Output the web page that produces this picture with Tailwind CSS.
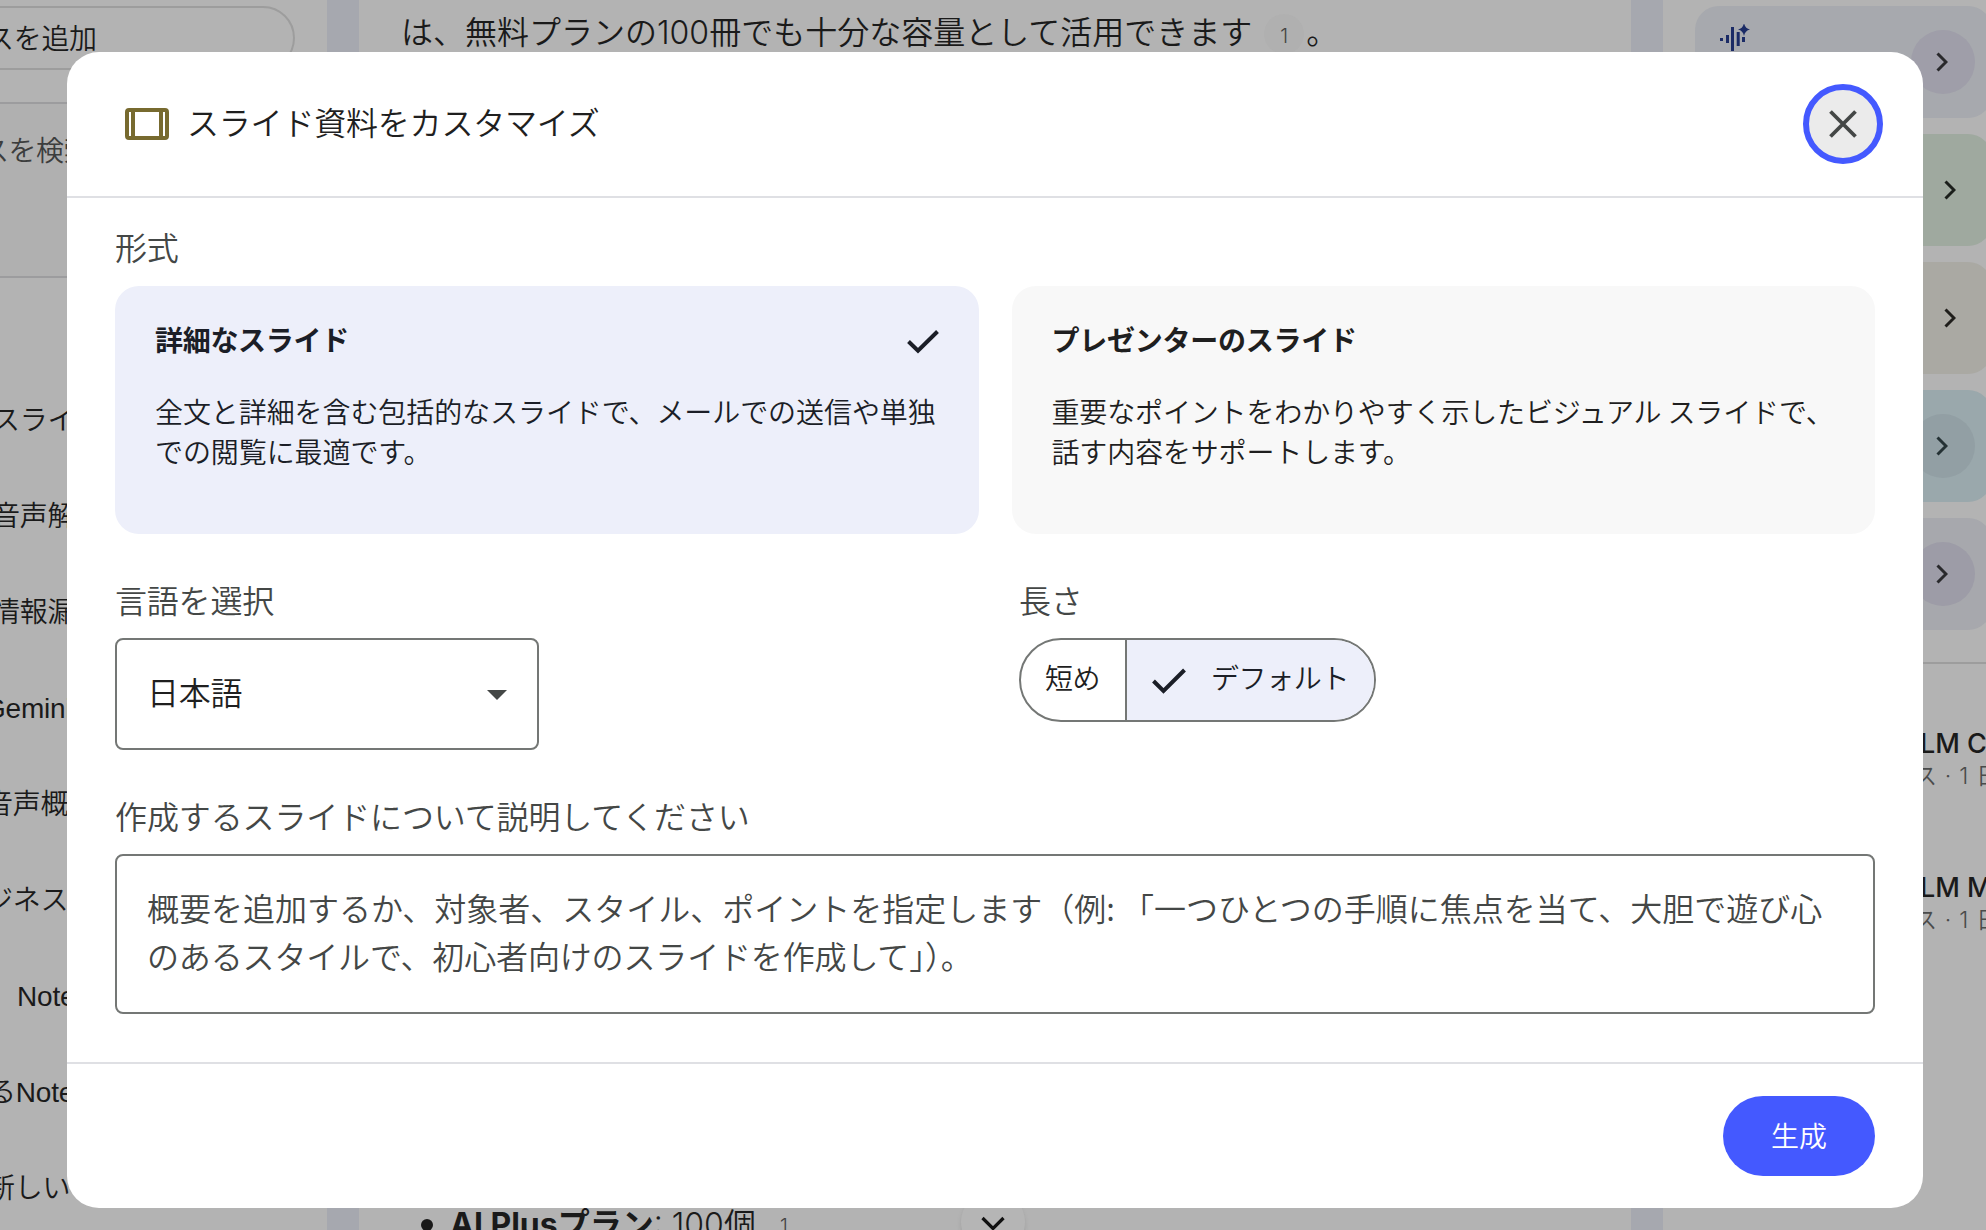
<!DOCTYPE html>
<html lang="ja">
<head>
<meta charset="utf-8">
<title>スライド資料をカスタマイズ</title>
<script src="https://cdn.jsdelivr.net/npm/@tailwindcss/browser@4"></script>
</head>
<body class="relative h-[1230px] w-[1986px] overflow-hidden bg-[#a6a8af] font-['Noto_Sans_CJK_JP',sans-serif] font-[350] text-[#1a1a1a]">

<!-- Page behind the dialog -->
<div class="flex h-full gap-8 whitespace-nowrap">
  <!-- Sources panel -->
  <aside class="w-[327px] shrink-0 overflow-hidden bg-[#b3b3b3]">
    <div class="-ml-10 mt-1.5 flex h-16 w-[335px] items-center rounded-full border-2 border-[#9d9d9d] pb-0.5 pl-6 text-[28px] tracking-[-0.3px]">スを追加</div>
    <div class="-ml-10 mt-8 h-44 w-[340px] rounded-3xl border-2 border-[#9c9c9e] bg-[#b0b0b0] pl-[19px] pt-[22px] text-[28px] leading-[46px] tracking-[-0.5px] text-[#3c3d3d]">スを検索</div>
    <ul class="mt-[92px] text-[28px] tracking-[-0.2px]">
      <li class="-ml-2 flex h-24 items-center">スライド</li>
      <li class="-ml-2 flex h-24 items-center">音声解説</li>
      <li class="-ml-2 flex h-24 items-center">情報漏洩</li>
      <li class="-ml-4 flex h-24 items-center pt-1.5 font-['Liberation_Sans',sans-serif]">Gemini</li>
      <li class="-ml-[15px] flex h-24 items-center">音声概要</li>
      <li class="-ml-[15px] flex h-24 items-center">ジネス</li>
      <li class="ml-[17px] flex h-24 items-center pt-1.5 font-['Liberation_Sans',sans-serif]">Notebook</li>
      <li class="-ml-[12px] flex h-24 items-center pt-[5px] font-['Liberation_Sans','Noto_Sans_CJK_JP',sans-serif]">るNotebook</li>
      <li class="-ml-[13px] flex h-24 items-center">新しい</li>
    </ul>
  </aside>

  <!-- Chat panel -->
  <main class="flex w-[1272px] shrink-0 flex-col justify-between bg-[#b3b3b3] pl-[42px] text-[32px] leading-[60px]">
    <p class="flex">
      <span class="pt-[3px] font-['Inter','Noto_Sans_CJK_JP',sans-serif]">は、無料プランの100冊でも十分な容量として活用できます</span>
      <span class="ml-3 mt-3.5 flex size-10 items-center justify-center rounded-full bg-[#b0b0b0] pt-1 font-['Inter',sans-serif] text-xl text-[#444]">1</span>
      <span class="ml-0.5">。</span>
    </p>
    <div class="flex h-11 items-start">
      <span class="ml-5 mt-[33px] size-3 rounded-full bg-[#1a1a1a]"></span>
      <span class="ml-[17px] font-['Inter','Noto_Sans_CJK_JP',sans-serif] leading-[77px]"><b>AI Plusプラン</b>: 100個</span>
      <span class="ml-6 font-['Inter',sans-serif] text-xl leading-[80px] text-[#444]">1</span>
      <span class="ml-[173px] mt-1 flex size-16 items-center justify-center rounded-full bg-[#b5b5b5] shadow-md">
        <svg class="mt-1 h-4 w-6" viewBox="0 0 24 16" fill="none" stroke="#111" stroke-width="3.2"><path d="M1.5 2 12 12.5 22.500 2"/></svg>
      </span>
    </div>
  </main>

  <!-- Studio panel -->
  <aside class="w-[340px] shrink-0 bg-[#b3b3b3] pl-8 pt-1.5">
    <div class="flex w-[297px] flex-col gap-4">
      <div class="flex h-28 items-start justify-between rounded-3xl bg-[#a7a9ae] pl-6 pr-[17px] pt-6">
        <svg class="-mt-1.5 h-8 w-8" viewBox="0 0 32 32" fill="#1b2b66"><path d="M1 14h3v3H1zM7 11h3v8H7zM12 3h3v24h-3zM17.700 8h3v14h-3zM23 13h3v5h-3zM25 -1q1 5.500 6 6.500-5 1-6 6.500-1-5.500-6-6.500 5-1 6-6.500z"/></svg>
        <span class="flex size-16 items-center justify-center rounded-full bg-[#9f9ea9] pr-0.5"><svg class="h-5 w-3" viewBox="0 0 12 20" fill="none" stroke="#29292c" stroke-width="3"><path d="M1.500 1.500 10 10l-8.500 8.500"/></svg></span>
      </div>
      <div class="flex h-28 items-center justify-end rounded-3xl bg-[#9fa99f] pr-9"><svg class="h-5 w-3" viewBox="0 0 12 20" fill="none" stroke="#1b1f1b" stroke-width="3"><path d="M1.500 1.500 10 10l-8.500 8.500"/></svg></div>
      <div class="flex h-28 items-center justify-end rounded-3xl bg-[#aaa9a3] pr-9"><svg class="h-5 w-3" viewBox="0 0 12 20" fill="none" stroke="#1f1e1b" stroke-width="3"><path d="M1.500 1.500 10 10l-8.500 8.500"/></svg></div>
      <div class="flex h-28 items-center justify-end rounded-3xl bg-[#9aa8ac] pr-[17px]"><span class="flex size-16 items-center justify-center rounded-full bg-[#929fa4] pr-0.5"><svg class="h-5 w-3" viewBox="0 0 12 20" fill="none" stroke="#243134" stroke-width="3"><path d="M1.500 1.500 10 10l-8.500 8.500"/></svg></span></div>
      <div class="flex h-28 items-center justify-end rounded-3xl bg-[#a7a8ad] pr-[17px]"><span class="flex size-16 items-center justify-center rounded-full bg-[#9d9ca7] pr-0.5"><svg class="h-5 w-3" viewBox="0 0 12 20" fill="none" stroke="#29292c" stroke-width="3"><path d="M1.500 1.500 10 10l-8.500 8.500"/></svg></span></div>
    </div>
    <div class="-ml-8 mt-8 border-t-2 border-[#9d9d9d] pl-[257px] pt-[62px]">
      <div class="h-36 font-['Inter','Noto_Sans_CJK_JP',sans-serif]">
        <p class="text-[27px] font-medium leading-9">LM Cloud</p>
        <p class="-ml-1.5 text-[23px] leading-7 tracking-[0.7px] text-[#4a4b4b]">ス · 1 日前</p>
      </div>
      <div class="font-['Inter','Noto_Sans_CJK_JP',sans-serif]">
        <p class="text-[27px] font-medium leading-9">LM Map</p>
        <p class="-ml-1.5 text-[23px] leading-7 tracking-[0.7px] text-[#4a4b4b]">ス · 1 日前</p>
      </div>
    </div>
  </aside>
</div>

<!-- Dialog overlay -->
<div class="absolute inset-0 pb-[22px] pl-[67px] pr-[63px] pt-[52px]">
  <section class="flex h-full flex-col rounded-[32px] bg-white text-[32px] text-[#1f1f1f]">
    <header class="flex h-[146px] shrink-0 items-center border-b-2 border-[#dfe0e4] pl-[58px] pr-10">
      <svg class="h-8 w-11" viewBox="0 0 44 32" fill="none" stroke="#776a2f"><rect x="2" y="2" width="40" height="28" rx="2" stroke-width="4"/><path d="M8 2v28M36 2v28" stroke-width="4"/></svg>
      <h1 class="ml-[18px] pb-1.5 tracking-[-0.2px]">スライド資料をカスタマイズ</h1>
      <button class="ml-auto flex size-20 items-center justify-center rounded-full border-[6px] border-[#4459ff] bg-[#ebebeb]">
        <svg class="size-7" viewBox="0 0 28 28" stroke="#444746" stroke-width="3.800"><path d="M1.500 1.500l25 25M26.500 1.500l-25 25"/></svg>
      </button>
    </header>

    <div class="flex grow flex-col px-12 pt-6">
      <h2 class="h-16 leading-[49px] tracking-[-0.3px] text-[#444746]">形式</h2>
      <div class="grid grid-cols-2 gap-[33px] text-[28px] leading-10">
        <div class="h-[248px] rounded-3xl bg-[#edeffa] px-10 pt-[33px] text-[#1b1e27]">
          <div class="flex justify-between">
            <h3 class="font-bold tracking-[-0.3px]">詳細なスライド</h3>
            <svg class="mt-[11px] h-6 w-8" viewBox="0 0 32 24" fill="none" stroke="#1b1e27" stroke-width="4"><path d="M1.500 11.500 11 20.700 30.500 1.500"/></svg>
          </div>
          <p class="mt-8 whitespace-nowrap tracking-[-0.08px]">全文と詳細を含む包括的なスライドで、メールでの送信や単独<br>での閲覧に最適です。</p>
        </div>
        <div class="h-[248px] rounded-3xl bg-[#f8f8f8] px-10 pt-[33px]">
          <h3 class="font-bold tracking-[-0.25px]">プレゼンターのスライド</h3>
          <p class="mt-8 whitespace-nowrap tracking-[-0.15px]">重要なポイントをわかりやすく示したビジュアル スライドで、<br>話す内容をサポートします。</p>
        </div>
      </div>

      <div class="mt-10 flex">
        <div class="w-[904px]">
          <h2 class="h-16 leading-[50px] tracking-[-0.2px] text-[#444746]">言語を選択</h2>
          <div class="flex h-28 w-[424px] items-center justify-between rounded-lg border-2 border-[#747775] pl-[30px] pr-[30px] tracking-[-0.2px]">
            <span class="pb-1.5">日本語</span>
            <svg class="mt-px h-2.5 w-5" viewBox="0 0 20 10" fill="#444746"><path d="M0 0h20L10 10z"/></svg>
          </div>
        </div>
        <div>
          <h2 class="h-16 leading-[50px] tracking-[-0.3px] text-[#444746]">長さ</h2>
          <div class="flex h-[84px] w-[357px] overflow-hidden rounded-full border-2 border-[#747775] text-[28px] leading-[74px]">
            <span class="w-[106px] border-r-2 border-[#747775] pl-6 tracking-[-0.4px]">短め</span>
            <span class="flex grow bg-[#edeffa] pl-[25px] tracking-[-0.4px] text-[#1b1e27]">
              <svg class="mr-[25px] mt-7 h-[26px] w-[34px]" viewBox="0 0 34 26" fill="none" stroke="#1b1e27" stroke-width="4"><path d="M1.500 13 11.500 23 32.500 2"/></svg>デフォルト
            </span>
          </div>
        </div>
      </div>

      <h2 class="mt-10 h-16 leading-[50px] tracking-[-0.12px] text-[#444746]">作成するスライドについて説明してください</h2>
      <div class="h-40 whitespace-nowrap rounded-lg border-2 border-[#747775] pl-[30px] pt-[27px] leading-[48px] text-[#444746]">
        <p>概要を追加するか、対象者、スタイル、ポイントを指定します（例: 「一つひとつの手順に焦点を当て、大胆で遊び心</p>
        <p class="tracking-[-0.15px]">のあるスタイルで、初心者向けのスライドを作成して」）。</p>
      </div>
    </div>

    <footer class="flex h-[146px] shrink-0 items-center justify-end border-t-2 border-[#dfe0e4] px-12">
      <button class="h-20 w-[152px] rounded-full bg-[#4459ff] pb-0.5 text-[28px] text-white">生成</button>
    </footer>
  </section>
</div>
</body>
</html>
